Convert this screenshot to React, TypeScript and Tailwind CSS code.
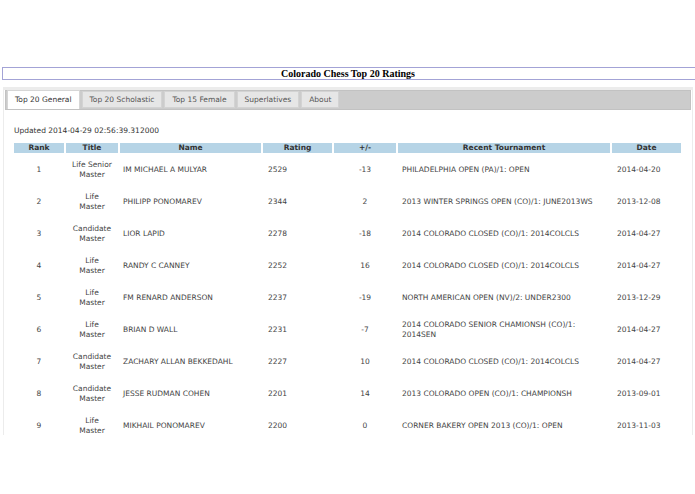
import React from 'react'

const tabs = ['Top 20 General', 'Top 20 Scholastic', 'Top 15 Female', 'Superlatives', 'About']

const rows = [
  ['1', 'Life Senior', 'Master', 'IM MICHAEL A MULYAR', '2529', '-13', 'PHILADELPHIA OPEN (PA)/1: OPEN', '2014-04-20'],
  ['2', 'Life', 'Master', 'PHILIPP PONOMAREV', '2344', '2', '2013 WINTER SPRINGS OPEN (CO)/1: JUNE2013WS', '2013-12-08'],
  ['3', 'Candidate', 'Master', 'LIOR LAPID', '2278', '-18', '2014 COLORADO CLOSED (CO)/1: 2014COLCLS', '2014-04-27'],
  ['4', 'Life', 'Master', 'RANDY C CANNEY', '2252', '16', '2014 COLORADO CLOSED (CO)/1: 2014COLCLS', '2014-04-27'],
  ['5', 'Life', 'Master', 'FM RENARD ANDERSON', '2237', '-19', 'NORTH AMERICAN OPEN (NV)/2: UNDER2300', '2013-12-29'],
  ['6', 'Life', 'Master', 'BRIAN D WALL', '2231', '-7', '2014 COLORADO SENIOR CHAMIONSH (CO)/1: 2014SEN', '2014-04-27'],
  ['7', 'Candidate', 'Master', 'ZACHARY ALLAN BEKKEDAHL', '2227', '10', '2014 COLORADO CLOSED (CO)/1: 2014COLCLS', '2014-04-27'],
  ['8', 'Candidate', 'Master', 'JESSE RUDMAN COHEN', '2201', '14', '2013 COLORADO OPEN (CO)/1: CHAMPIONSH', '2013-09-01'],
  ['9', 'Life', 'Master', 'MIKHAIL PONOMAREV', '2200', '0', 'CORNER BAKERY OPEN 2013 (CO)/1: OPEN', '2013-11-03'],
]

export default function App() {
  return (
    <div className="w-[695px] h-[494px] overflow-hidden bg-white font-['DejaVu_Sans',Verdana,sans-serif] text-[7.5px] text-[#444]">
      <div className="pt-[67px] pl-[2px]">
        <div className="w-[700px] h-[13px] border border-[#a3a3d6] flex items-center justify-center font-['Liberation_Serif',serif] font-bold text-[10px] text-black pr-[8px]">
          Colorado Chess Top 20 Ratings
        </div>
      </div>

      <div className="ml-[3px] mr-[2px] mt-[7px] h-[348px] overflow-hidden border-l border-r border-t-[3px] border-[#ececec] px-[1px]">
        <div className="h-[20px] bg-[#cccccc] border border-[#c2c2c2] flex items-end gap-[2px] pl-[1px]">
          {tabs.map((t, i) => (
            <div
              key={t}
              className={
                i === 0
                  ? 'h-[19px] px-[7px] bg-white border border-b-0 border-[#d6d6d6] flex items-center text-[#333]'
                  : 'h-[17px] mb-[1px] px-[7px] bg-[#e6e6e6] border border-[#d3d3d3] flex items-center text-[#555]'
              }
            >
              {t}
            </div>
          ))}
        </div>

        <div className="pl-[9px] pt-[15px] text-[#333]">Updated 2014-04-29 02:56:39.312000</div>

        <table className="ml-[7px] mt-[5px] border-separate border-spacing-[2px] table-fixed">
          <colgroup>
            <col className="w-[50px]" />
            <col className="w-[52px]" />
            <col className="w-[141px]" />
            <col className="w-[69px]" />
            <col className="w-[62px]" />
            <col className="w-[212px]" />
            <col className="w-[69px]" />
          </colgroup>
          <thead>
            <tr className="bg-[#b6d4e6] text-[#333] font-bold h-[10px] leading-[10px]">
              <th className="font-bold">Rank</th>
              <th className="font-bold">Title</th>
              <th className="font-bold">Name</th>
              <th className="font-bold">Rating</th>
              <th className="font-bold">+/-</th>
              <th className="font-bold">Recent Tournament</th>
              <th className="font-bold">Date</th>
            </tr>
          </thead>
          <tbody>
            {rows.map((r) => (
              <tr key={r[0]} className="h-[30px] leading-[10px]">
                <td className="text-center">{r[0]}</td>
                <td className="text-center">
                  {r[1]}
                  <br />
                  {r[2]}
                </td>
                <td className="pl-[3px]">{r[3]}</td>
                <td className="pl-[5px]">{r[4]}</td>
                <td className="text-center">{r[5]}</td>
                <td className="pl-[4px]">{r[6]}</td>
                <td className="pl-[5px]">{r[7]}</td>
              </tr>
            ))}
          </tbody>
        </table>
      </div>
    </div>
  )
}
